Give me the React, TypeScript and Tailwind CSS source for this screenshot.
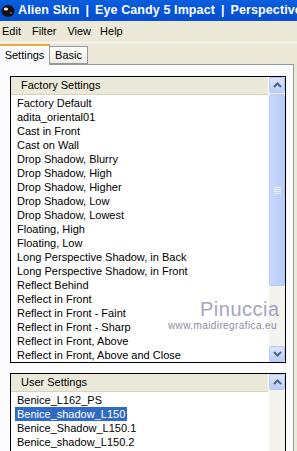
import React from 'react';

const factory = [
  'Factory Default',
  'adita_oriental01',
  'Cast in Front',
  'Cast on Wall',
  'Drop Shadow, Blurry',
  'Drop Shadow, High',
  'Drop Shadow, Higher',
  'Drop Shadow, Low',
  'Drop Shadow, Lowest',
  'Floating, High',
  'Floating, Low',
  'Long Perspective Shadow, in Back',
  'Long Perspective Shadow, in Front',
  'Reflect Behind',
  'Reflect in Front',
  'Reflect in Front - Faint',
  'Reflect in Front - Sharp',
  'Reflect in Front, Above',
  'Reflect in Front, Above and Close',
];

const user = ['Benice_L162_PS', 'Benice_shadow_L150', 'Benice_Shadow_L150.1', 'Benice_shadow_L150.2'];

function Chevron({ up }: { up?: boolean }) {
  return (
    <svg width="9" height="6" viewBox="0 0 9 6">
      <path
        d={up ? 'M1 5 L4.5 1.5 L8 5' : 'M1 1 L4.5 4.5 L8 1'}
        fill="none"
        stroke="#4d6185"
        strokeWidth="2"
      />
    </svg>
  );
}

function ArrowButton({ up }: { up?: boolean }) {
  return (
    <div className="h-[16px] w-[16px] flex items-center justify-center rounded-[2px] border border-[#b6c9f5] bg-gradient-to-b from-[#dbe5fd] to-[#b9cdf9]">
      <Chevron up={up} />
    </div>
  );
}

function ListBox({
  title,
  items,
  selected,
  height,
  thumb,
}: {
  title: string;
  items: string[];
  selected?: number;
  height: string;
  thumb?: boolean;
}) {
  return (
    <div className={`flex border border-black bg-white ${height}`}>
      <div className="flex-1 flex flex-col min-w-0">
        <div className="h-[18px] flex items-center pl-[10px] bg-[#ebe9d9] border-b border-[#d6d2c2] mr-[1px]">
          {title}
        </div>
        <div className="pt-[1px]">
          {items.map((it, i) => (
            <div key={it} className="h-[14px] leading-[14px] pl-[4px] whitespace-nowrap">
              <span
                className={`px-[2px] inline-block ${
                  i === selected ? 'bg-[#316ac5] text-white' : ''
                }`}
              >
                {it}
              </span>
            </div>
          ))}
        </div>
      </div>
      <div className="w-[16px] flex flex-col bg-[#f4f3ee]">
        <ArrowButton up />
        {thumb && (
          <>
            <div className="h-[192px] mt-[1px] rounded-[2px] border border-[#b6c9f5] bg-gradient-to-r from-[#c9d8fc] to-[#b8ccf8] flex items-center justify-center">
              <div className="flex flex-col gap-[1px]">
                <div className="w-[7px] h-[1px] bg-[#eef3fe]" />
                <div className="w-[7px] h-[1px] bg-[#eef3fe]" />
                <div className="w-[7px] h-[1px] bg-[#eef3fe]" />
                <div className="w-[7px] h-[1px] bg-[#eef3fe]" />
              </div>
            </div>
            <div className="flex-1" />
            <ArrowButton />
          </>
        )}
      </div>
    </div>
  );
}

export default function App() {
  return (
    <div
      className="relative w-[297px] h-[451px] overflow-hidden bg-[#ece9d8] text-[11px] text-black"
      style={{ fontFamily: '"Liberation Sans", Arial, sans-serif' }}
    >
      <div className="h-[21px] flex items-center bg-gradient-to-b from-[#0a5fdc] via-[#0453d9] to-[#0a4fce] whitespace-nowrap overflow-hidden">
        <svg width="16" height="16" viewBox="0 0 16 16" className="ml-[1px] mr-[1px] shrink-0">
          <ellipse cx="7" cy="8" rx="6.5" ry="6" fill="#111" />
          <ellipse cx="5" cy="6" rx="2.2" ry="1.6" fill="#e8e8e8" />
          <ellipse cx="10" cy="10" rx="1.5" ry="1" fill="#555" />
        </svg>
        <div className="flex text-white font-bold text-[12.5px] tracking-[0.1px]">
          <span>Alien Skin</span>
          <span className="mx-[6px]">|</span>
          <span>Eye Candy 5 Impact</span>
          <span className="mx-[6px]">|</span>
          <span>Perspective Shadow</span>
        </div>
      </div>
      <div className="h-[22px] flex items-center gap-[11px] pl-[2px] border-b border-white">
        <span>Edit</span>
        <span>Filter</span>
        <span>View</span>
        <span className="-ml-[2px]">Help</span>
      </div>
      <div className="h-[21px] flex items-end">
        <div className="h-[21px] w-[50px] bg-[#fcfcfe] border-t-2 border-[#f3a83b] border-r border-r-[#919b9c] flex items-center justify-center relative z-10 -mb-[1px]">
          Settings
        </div>
        <div className="h-[18px] w-[38px] bg-gradient-to-b from-[#ffffff] to-[#ecebe5] border border-l-0 border-[#919b9c] flex items-center justify-center">
          Basic
        </div>
      </div>
      <div className="w-[294px] h-[400px] bg-[#fcfcfe] border-t border-r border-[#919b9c] pl-[10px] pr-[7px] pt-[11px] flex flex-col gap-[10px]">
        <ListBox title="Factory Settings" items={factory} height="h-[290px]" thumb />
        <ListBox title="User Settings" items={user} selected={1} height="h-[100px]" />
      </div>
      <div className="absolute left-[200px] top-[298px] text-[20px] leading-[22px] tracking-[0.5px] text-[#a4a4c2]">
        Pinuccia
      </div>
      <div className="absolute left-[168px] top-[320px] text-[10px] leading-[12px] tracking-[0.4px] text-[#8c8c9e]">
        www.maidiregrafica.eu
      </div>
    </div>
  );
}
